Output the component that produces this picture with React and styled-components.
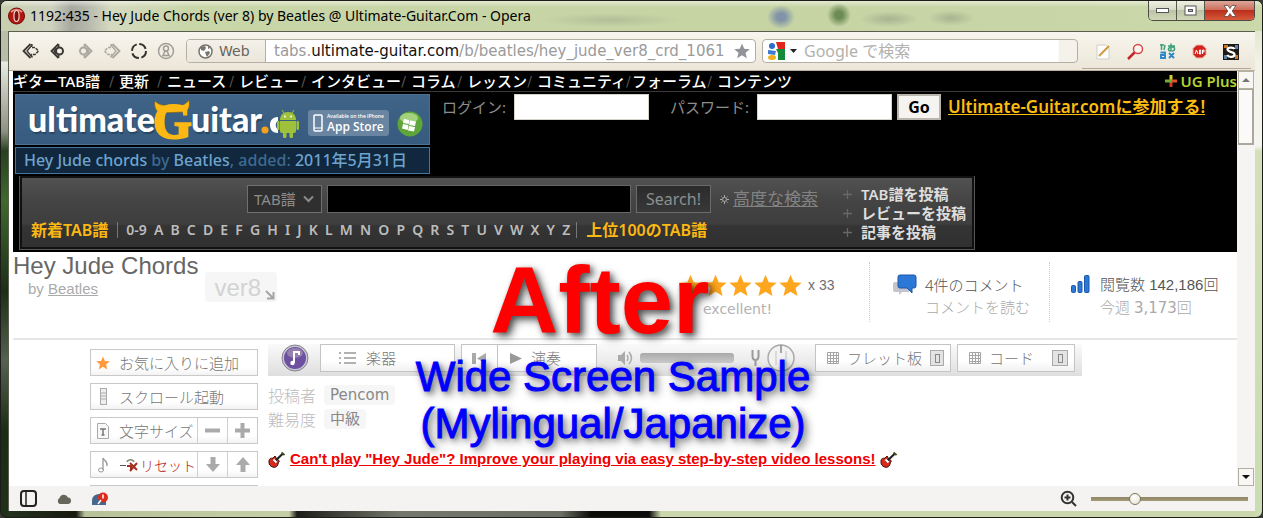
import React from "react";
import styled, { createGlobalStyle } from "styled-components";

const UI = `"DejaVu Sans", "Noto Sans CJK JP", sans-serif`;
const JP = `"Noto Sans CJK JP", "DejaVu Sans", sans-serif`;
const TREB = `"Noto Sans", "Noto Sans CJK JP", sans-serif`;
const ARIAL = `"Liberation Sans", "Noto Sans CJK JP", sans-serif`;

const Global = createGlobalStyle`
  * { box-sizing: border-box; }
  body { margin: 0; background: #3a3a36; font-family: ${UI}; font-size: 14px; }
  button, input, select { font: inherit; margin: 0; padding: 0; border-radius: 0; }
  h1, p, ul { margin: 0; padding: 0; font-weight: normal; }
  ul { list-style: none; }
  svg { display: block; flex: none; }
`;

/* ---------- window frame ---------- */
const Window = styled.div`
  position: relative;
  display: flex;
  flex-direction: column;
  height: 100vh;
  padding: 0 7px 6px;
  border: 1px solid #1c1d18;
  border-radius: 7px;
  overflow: hidden;
  background:
    linear-gradient(180deg, #b9c0a8 0, #b8bda8 60px, #e8ebe2 61px, #8d9283 130px, #27401f 150px, #3e6a2c 200px, #1c2e18 290px, #56614f 360px, #1b2b16 430px, #20301b 100%) left top / 7px 100% no-repeat,
    linear-gradient(180deg, #d3dcb8 0, #f2f2e6 60px, #f4f5ee 145px, #d3dfb8 150px, #cbdcb0 100%) right top / 7px 100% no-repeat,
    linear-gradient(90deg, #26351f 0, #17180f 75px, #b8c29a 84px, #c5cfa6 288px, #1b1b18 296px, #74786c 400px, #6b6f64 560px, #0c0c0a 590px, #0c0c0a 648px, #cad6ab 660px, #cad6ab 100%);
`;

const TitleBar = styled.header`
  display: flex;
  align-items: flex-start;
  height: 30px;
  flex: none;
  margin: 0 -7px;
  padding-left: 7px;
  background:
    radial-gradient(ellipse 14px 12px at 780px 16px, #8093a8 30%, transparent),
    radial-gradient(ellipse 12px 12px at 838px 14px, #6b8a54 30%, transparent),
    radial-gradient(ellipse 30px 8px at 888px 18px, #a9b391, transparent),
    radial-gradient(ellipse 24px 8px at 950px 17px, #a9b391, transparent),
    radial-gradient(ellipse 70px 7px at 610px 19px, #b3bf98, transparent),
    linear-gradient(180deg, rgba(255,255,255,.5) 0, transparent 6px),
    linear-gradient(90deg, #c6cfae 0, #cfd2bf 50px, #a7a9a0 70px, #b3b5ab 84px, #d5dabf 110px, #c9d6a8 190px, #c6d4a4 60%, #cad8aa 100%);
`;
const AppMark = styled.div`
  padding-top: 6px;
`;
const WindowTitle = styled.h1`
  flex: 1;
  padding: 6px 0 0 5px;
  font: 14px/18px "Noto Sans", ${UI};
  color: #000;
  white-space: nowrap;
`;
const WindowControls = styled.div`
  display: flex;
  height: 20px;
  margin-right: 7px;
  border: 1px solid #4d4b43;
  border-top: 0;
  border-radius: 0 0 5px 5px;
  overflow: hidden;
`;
const ControlButton = styled.button`
  display: flex;
  align-items: center;
  justify-content: center;
  width: ${(p) => (p.$close ? 49 : 28)}px;
  border: 0;
  border-right: ${(p) => (p.$close ? "0" : "1px solid #55564a")};
  background: ${(p) =>
    p.$close
      ? "linear-gradient(180deg,#dba79a 0,#cf6f5c 45%,#b92f1b 50%,#d9593c 100%)"
      : "linear-gradient(180deg,#eef0e2 0,#d6dac5 45%,#bcc3a5 50%,#d0d8b7 100%)"};
`;

const Client = styled.div`
  display: flex;
  flex-direction: column;
  flex: 1;
  min-height: 0;
  border: 1px solid #5b5e4e;
  border-width: 1px 0 0 1px;
  background: #f6f4f2;
`;

/* ---------- browser toolbar ---------- */
const Toolbar = styled.div`
  display: flex;
  align-items: center;
  flex: none;
  height: 39px;
  padding: 0 4px 0 13px;
  background: linear-gradient(180deg, #f7f5ee 0, #f1ece0 60%, #ebe6d8 100%);
  border-bottom: 1px solid #b9b09f;
`;
const NavButtons = styled.div`
  display: flex;
  gap: 9px;
`;
const PlainButton = styled.button`
  display: flex;
  align-items: center;
  justify-content: center;
  width: ${(p) => p.$w || 18}px;
  height: 20px;
  border: 0;
  background: none;
`;
const AddressBar = styled.div`
  display: flex;
  align-items: center;
  flex: 1;
  height: 24px;
  margin-left: 11px;
  border: 1px solid #b3afa2;
  border-radius: 4px;
  background: #fff;
  overflow: hidden;
  padding-right: 5px;
`;
const WebBadge = styled.button`
  display: flex;
  align-items: center;
  gap: 6px;
  height: 24px;
  width: 79px;
  padding: 0 0 0 11px;
  border: 0;
  border-right: 1px solid #b3afa2;
  background: linear-gradient(180deg, #f4f1ea, #ebe6da);
  color: #66645f;
`;
const UrlText = styled.div`
  flex: 1;
  padding-left: 8px;
  font: 15px/22px ${UI};
  color: #9a9a9a;
  white-space: nowrap;
  b { font-weight: normal; color: #111; }
`;
const SearchBox = styled.label`
  display: flex;
  align-items: center;
  width: 316px;
  height: 24px;
  margin-left: 6px;
  padding-left: 4px;
  gap: 5px;
  border: 1px solid #b3afa2;
  border-radius: 4px;
  background: linear-gradient(90deg, #fff 295px, #f5f2ec 296px);
  input {
    flex: 1;
    min-width: 0;
    height: 22px;
    margin-left: 2px;
    border: 0;
    background: transparent;
    font-family: ${TREB};
    font-size: 16px;
  }
  input::placeholder { color: #b3b1ad; opacity: 1; }
`;
const Extensions = styled.div`
  display: flex;
  align-items: center;
  justify-content: space-between;
  width: 169px;
  height: 33px;
  margin: 2px 0 0 4px;
  padding: 0 11px 0 12px;
  border-bottom: 1px solid #b5a89a;
`;

/* ---------- page view ---------- */
const View = styled.div`
  display: flex;
  flex: 1;
  min-height: 0;
  padding-left: 4px;
  background: #fff;
`;
const Page = styled.main`
  position: relative;
  flex: 1;
  min-width: 0;
  overflow: hidden;
  background: #fff;
`;
const Scrollbar = styled.div`
  display: flex;
  flex-direction: column;
  width: 18px;
  background: #f5f4f2;
  padding: 0 1px;
`;
const ScrollButton = styled.button`
  display: flex;
  align-items: center;
  justify-content: center;
  height: 18px;
  border: 1px solid #b3b0a2;
  background: #f8f7f3;
`;
const ScrollTrack = styled.div`
  flex: 1;
`;
const ScrollThumb = styled.div`
  height: 56px;
  border: 1px solid #aaa89c;
  border-right-width: 2px;
  border-bottom-width: 2px;
  background: #fbfaf8;
`;

/* ---------- site header ---------- */
const SiteHeader = styled.div`
  background: #000;
  height: 181px;
`;
const TopNav = styled.nav`
  display: flex;
  justify-content: space-between;
  height: 21px;
  border-bottom: 1px solid #3c3a38;
`;
const NavList = styled.ul`
  display: grid;
  grid-template-columns: 106px 48px 72px 72px 100px 56px 70px 95px 85px 80px;
  li { display: flex; justify-content: space-between; padding-right: 5px; white-space: nowrap; }
`;
const NavLink = styled.a`
  font: 500 15px/20px ${TREB};
  color: #fff;
  text-decoration: none;
`;
const Slash = styled.span`
  font: 14px/20px ${UI};
  color: #555;
`;
const PlusLink = styled.a`
  display: flex;
  align-items: center;
  gap: 4px;
  font: 600 15px/20px ${TREB};
  color: #b4d334;
  text-decoration: none;
`;
const HeaderTop = styled.div`
  display: flex;
  height: 84px;
  padding: 2px 0 0 2px;
`;
const Brand = styled.div`
  width: 415px;
  display: flex;
  flex-direction: column;
  gap: 2px;
`;
const Banner = styled.div`
  display: flex;
  align-items: center;
  height: 51px;
  padding-right: 6px;
  background: linear-gradient(180deg, #406487, #365b7e);
  border: 1px solid #4c7092;
`;
const StoreBadge = styled.a`
  display: flex;
  align-items: center;
  gap: 4px;
  width: 81px;
  height: 26px;
  margin: 7px 8px 0 auto;
  padding-left: 5px;
  border-radius: 3px;
  background: #6985a2;
  color: #fff;
  text-decoration: none;
  font: 600 12px/13px "Open Sans", sans-serif;
  white-space: nowrap;
  small { display: block; font-size: 5px; line-height: 7px; }
`;
const AddedLine = styled.p`
  height: 27px;
  padding-left: 8px;
  border: 1px solid #46759c;
  background: #10273d;
  color: #3f6a8f;
  font: 500 16px/25px ${TREB};
  white-space: nowrap;
  b { font-weight: 500; color: #6ea3cd; }
`;
const LoginForm = styled.form`
  display: flex;
  align-items: center;
  height: 26px;
  padding-left: 12px;
  font: 15px/24px ${TREB};
  color: #8d8d8d;
  white-space: nowrap;
  label { display: flex; align-items: center; justify-content: space-between; margin-right: 21px; }
  label + label { margin-right: 5px; }
`;
const LoginInput = styled.input`
  width: 135px;
  height: 26px;
  margin-left: 8px;
  border: 1px solid #d5d2ca;
  background: #fff;
`;
const GoButton = styled.button`
  width: 44px;
  height: 26px;
  border: 2px solid #b9b5ad;
  background: #f6f4f1;
  color: #000;
  font: bold 16px/20px ${TREB};
`;
const JoinLink = styled.a`
  margin-left: 7px;
  color: #fdbd10;
  font: 600 17px/24px ${TREB};
`;

const SearchPanel = styled.form`
  display: flex;
  width: 956px;
  max-width: 100%;
  height: 74px;
  margin-left: 6px;
  padding: 9px 4px 6px 11px;
  border: 1px solid #555;
  border-top: 0;
  background: linear-gradient(180deg, #535353 0, #444 25px, #3e3e3e 48px, #343434 50px, #303030 100%);
  box-shadow: inset 0 0 0 2px #111;
`;
const SearchMain = styled.div`
  width: 812px;
  display: flex;
  flex-direction: column;
  gap: 6px;
`;
const SearchRow = styled.div`
  display: flex;
  align-items: center;
  height: 28px;
  padding-left: 216px;
`;
const KindSelect = styled.span`
  display: flex;
  align-items: center;
  width: 75px;
  height: 28px;
  padding: 0 7px 0 6px;
  border: 1px solid #707070;
  background: #2f2f2f;
  select {
    flex: 1;
    min-width: 0;
    appearance: none;
    border: 0;
    background: transparent;
    color: #8c8c8c;
    font: 15px/24px ${TREB};
  }
`;
const QueryInput = styled.input`
  width: 304px;
  height: 28px;
  margin: 0 5px 0 5px;
  border: 1px solid #666;
  background: #000;
`;
const SearchButton = styled.button`
  width: 75px;
  height: 28px;
  border: 1px solid #6b6b6b;
  background: linear-gradient(180deg, #2b2b2b, #383838);
  color: #8b9090;
  font: 16px/24px ${TREB};
`;
const AdvancedLink = styled.a`
  margin-left: 4px;
  color: #838383;
  font: 17px/24px ${TREB};
`;
const AlphaRow = styled.div`
  display: flex;
  align-items: center;
  gap: 9px;
  font: 600 14px/22px ${TREB};
  white-space: nowrap;
`;
const AccentLink = styled.a`
  color: #fbb813;
  text-decoration: none;
  font: 600 16px/22px ${TREB};
`;
const Letters = styled.div`
  display: flex;
  justify-content: space-between;
  width: 460px;
  padding: 0 6px 0 8px;
  border: solid #777;
  border-width: 0 1px;
  line-height: 16px;
  a { color: #bdbdbd; text-decoration: none; }
`;
const SubmitList = styled.ul`
  li { display: flex; align-items: center; gap: 9px; height: 19px; white-space: nowrap; }
  a { color: #dedede; text-decoration: none; font: 600 15px/19px ${TREB}; }
`;

/* ---------- song header ---------- */
const SongHeader = styled.section`
  display: flex;
  height: 88px;
  border-bottom: 2px solid #e6e6e6;
  color: #6d6d6d;
  font-family: ${ARIAL};
`;
const SongTitle = styled.div`
  h2 { margin: 0; font: 24px/27px ${ARIAL}; color: #666; white-space: nowrap; }
  p { padding-left: 15px; font: 15px/20px ${ARIAL}; color: #aaa; }
  a { color: #aaa; }
`;
const Version = styled.button`
  display: flex;
  align-items: flex-end;
  gap: 4px;
  width: 72px;
  height: 30px;
  margin: 20px auto 0 7px;
  padding: 0 0 0 9px;
  border: 0;
  border-radius: 3px;
  background: #f6f6f6;
  color: #d3d3d3;
  font: 24px/29px ${ARIAL};
`;
const Stat = styled.div`
  display: flex;
  gap: ${(p) => p.$gap || 8}px;
  width: ${(p) => p.$w}px;
  height: 60px;
  margin-top: 10px;
  padding: 12px 0 0 ${(p) => p.$left}px;
  border-left: 1px dotted #ccc;
`;
const StatText = styled.div`
  font: 300 15px/22px ${(p) => (p.$ui ? TREB : ARIAL)};
  color: #555;
  white-space: nowrap;
  small { display: block; font: 300 15px/22px ${TREB}; color: #aaa; }
  small span { font: 15px/22px ${UI}; }
`;
const Rating = styled.div`
  width: 200px;
  padding: 22px 0 0 10px;
  font: 14px/23px ${ARIAL};
  small { display: block; padding-left: 24px; font: 14px/24px ${UI}; color: #b2b2b2; }
`;
const StarRow = styled.div`
  display: flex;
  gap: 2px;
  white-space: nowrap;
  span { padding-left: 4px; }
`;

/* ---------- song tools ---------- */
const Body = styled.div`
  display: flex;
  gap: 10px;
  padding-left: 77px;
`;
const Sidebar = styled.div`
  display: flex;
  flex-direction: column;
  flex: none;
  gap: 7px;
  width: 168px;
  padding-top: 9px;
`;
const SideRow = styled.div`
  display: flex;
  height: 27px;
  border: 1px solid #c9c9c9;
  background: linear-gradient(180deg, #fff 70%, #f3f3f3);
`;
const SideButton = styled.button`
  display: flex;
  align-items: center;
  flex: 1;
  min-width: 0;
  gap: ${(p) => (p.$red ? 2 : 9)}px;
  padding-left: 5px;
  border: 0;
  background: none;
  color: ${(p) => (p.$red ? "#b01717" : "#777")};
  font: 300 ${(p) => (p.$red ? 14 : 15)}px/24px ${JP};
  white-space: nowrap;
`;
const StepButton = styled.button`
  display: flex;
  align-items: center;
  justify-content: center;
  flex: none;
  width: 30px;
  border: 0;
  border-left: 1px solid #d0d0d0;
  background: none;
`;
const Main = styled.div`
  flex: 1;
  min-width: 0;
  padding-top: 4px;
`;
const PlayerBar = styled.div`
  display: flex;
  width: 814px;
  height: 32px;
  padding-left: 13px;
  background: linear-gradient(180deg, #fafafa, #dedede);
`;
const BarButton = styled.button`
  display: flex;
  align-items: center;
  gap: ${(p) => p.$gap || 8}px;
  width: ${(p) => p.$w}px;
  height: 28px;
  margin-left: ${(p) => p.$ml || 0}px;
  padding: 0 6px 0 ${(p) => p.$pl || 11}px;
  border: 1px solid #c4c4c4;
  border-left-width: ${(p) => (p.$joined ? 0 : 1)}px;
  background: linear-gradient(180deg, #fff 60%, #f1f1f1);
  color: #777;
  font: 300 15px/24px ${JP};
  white-space: nowrap;
`;
const Key = styled.kbd`
  display: flex;
  align-items: center;
  justify-content: center;
  width: 16px;
  height: 16px;
  margin-left: auto;
  border: 1px solid #aaa;
  background: #e3e3e3;
  i { width: 5px; height: 9px; border: 1px solid #888; }
`;
const Volume = styled.input`
  appearance: none;
  width: 94px;
  height: 10px;
  margin: 9px 0 0 6px;
  border-radius: 3px;
  background: linear-gradient(180deg, #a9a9a9, #c9c9c9);
  &::-webkit-slider-thumb { appearance: none; width: 1px; height: 1px; }
`;
const Gadget = styled.div`
  padding-top: ${(p) => p.$top || 0}px;
  margin-left: ${(p) => p.$ml || 0}px;
`;
const Facts = styled.dl`
  display: grid;
  grid-template-columns: 56px auto;
  justify-content: start;
  row-gap: 4px;
  margin: 9px 0 0;
  font: 300 16px/20px ${JP};
  color: #bbb;
  dd { margin: 0; justify-self: start; padding: 0 6px; border-radius: 4px; background: #f6f6f6; color: #888; font: 15px/20px ${UI}; }
`;
const Promo = styled.p`
  display: flex;
  align-items: center;
  gap: 5px;
  margin-top: 21px;
  a { color: #f00000; font: bold 15px/18px ${ARIAL}; white-space: nowrap; }
`;

/* ---------- caption lying over the page ---------- */
const Caption = styled.div`
  position: absolute;
  left: 400px;
  top: 178px;
  width: 400px;
  text-align: center;
  white-space: nowrap;
  font-family: ${ARIAL};
  text-shadow: 4px 4px 9px rgba(0,0,0,.55), 2px 2px 5px rgba(0,0,0,.35);
  pointer-events: none;
`;
const BigWord = styled.div`
  padding-right: 26px;
  font-size: 94px;
  line-height: 104px;
  font-weight: bold;
  color: #f00;
`;
const SubLine = styled.div`
  font-size: 42px;
  line-height: 47px;
  color: #00f;
  -webkit-text-stroke: 1px #00f;
`;

/* ---------- status bar ---------- */
const StatusBar = styled.footer`
  display: flex;
  align-items: center;
  flex: none;
  height: 25px;
  padding: 0 7px 0 11px;
  background: #f5f3f1;
`;
const Zoom = styled.div`
  display: flex;
  align-items: center;
  gap: 14px;
  margin-left: auto;
`;
const ZoomRange = styled.input`
  appearance: none;
  width: 157px;
  height: 14px;
  background: linear-gradient(#8f8763, #a39b78) center / 100% 4px no-repeat;
  &::-webkit-slider-thumb {
    appearance: none;
    width: 12px;
    height: 12px;
    border: 1px solid #7d755a;
    border-radius: 50%;
    background: radial-gradient(circle at 40% 30%, #fff, #e6e0cc);
  }
`;

/* ---------- drawings ---------- */
const Arrow = ({ flip, pale, dot, bar }) => (
  <svg width="18" height="18" viewBox="0 0 18 18" fill="none" stroke={pale ? "#aaa89f" : "#3b3a35"} strokeWidth="1.8">
    <g transform={flip ? "translate(18 0) scale(-1 1)" : undefined}>
      {dot ? (
        <>
          <path d="M9.500 2 2.500 9l7 7" />
          <path d="M9.500 2v3M9.500 13v3" />
          <circle cx="10.500" cy="9" r="3.500" strokeWidth="2" />
          <path d="M5 9l2.500-2.500M5 9l2.500 2.500" />
        </>
      ) : (
        <>
          <path d="M8.500 2 1.500 9l7 7" />
          <path d="M10.500 2.500 5 9l5.500 6.500" strokeWidth="1.300" />
          <path d="M9.500 2v3.500h3.500l3.500 3.500-3.500 3.500H9.500V16" strokeWidth="1.500" strokeDasharray={bar ? "3 1" : undefined} />
        </>
      )}
    </g>
  </svg>
);
const Star = ({ size = 23, fill = "#ffa61f" }) => (
  <svg width={size} height={size} viewBox="0 0 24 24">
    <path fill={fill} d="M12 .8l3.300 7.700 8.400.7-6.400 5.500 2 8.300L12 18.500l-7.300 4.500 2-8.300L.3 9.200l8.400-.7z" />
  </svg>
);
const Grid = () => (
  <svg width="12" height="12" viewBox="0 0 12 12">
    <path fill="none" stroke="#a5a5a5" d="M.5.5h11v11H.5zM3.500 0v12M6.500 0v12M9.500 0v12M0 3.500h12M0 6.500h12M0 9.500h12" />
  </svg>
);
const Cross = () => (
  <svg width="9" height="9" viewBox="0 0 9 9"><path d="M4.500 0v9M0 4.500h9" stroke="#686868" strokeWidth="1.300" /></svg>
);
const Guitar = () => (
  <svg width="17" height="17" viewBox="0 0 17 17">
    <path d="M1 10C1 7.500 3 7 5 7.200L7 5l1.500 2.500L11.500 10C10 11 10.500 12.500 9.500 14.500c-1 1.800-3 2-5 1.500-2-.6-3.500-2.500-3.500-4.500z" fill="#d92a1d" stroke="#3a0d08" />
    <path d="M6 11 15 2.500" stroke="#222" strokeWidth="2.200" />
    <path d="M5.500 8.500 8.500 11.500" stroke="#fff" strokeWidth="2" />
    <path d="M13.500 1.500 16.500 4" stroke="#444d1c" strokeWidth="1.800" />
  </svg>
);
const Logo = () => (
  <svg width="286" height="49" viewBox="0 0 286 49">
    <g fontFamily="Lato, sans-serif" fontWeight="900" fontSize="34">
      <g fill="#1d3a57" opacity=".6"><text x="13" y="39">ultimate</text><text x="176" y="39">uitar</text></g>
      <g fill="#fff"><text x="12" y="37">ultimate</text><text x="175" y="37">uitar</text></g>
      <circle cx="249" cy="35" r="3.500" fill="#f7a11c" />
      <path d="M262 22c-5 0-8 3-8 8s3 8 8 8v-4c-3-1-3-7 0-8z" fill="#fff" />
    </g>
    <path d="M139 6c4 4 8 5 15 4h7c6 1 9-1 12-5 1 6 0 11-5 12l-24 1c-5-2-6-8-5-12z" fill="#fcb813" stroke="#7a5a10" strokeWidth=".6" />
    <text x="137" y="43" fontFamily="Liberation Serif, serif" fontWeight="bold" fontSize="50" fill="#fcb813" stroke="#fcb813" strokeWidth="2">G</text>
    <g fill="#9fc23c">
      <path d="M264 25c0-5 3-8 8-8s8 3 8 8z" />
      <path d="M264 26h16v10a2 2 0 0 1-2 2h-12a2 2 0 0 1-2-2z" />
      <rect x="261" y="26" width="2.500" height="9" rx="1.200" /><rect x="280.500" y="26" width="2.500" height="9" rx="1.200" />
      <rect x="267" y="36" width="3.500" height="7" rx="1.500" /><rect x="273.500" y="36" width="3.500" height="7" rx="1.500" />
      <path d="M266 15l2 3M278 15l-2 3" stroke="#9fc23c" />
    </g>
    <circle cx="269" cy="21.500" r="1" fill="#fff" /><circle cx="275" cy="21.500" r="1" fill="#fff" />
  </svg>
);

const NAV = ["ギターTAB譜", "更新", "ニュース", "レビュー", "インタビュー", "コラム", "レッスン", "コミュニティ", "フォーラム", "コンテンツ"];
const ALPHA = ["0-9", ..."ABCDEFGHIJKLMNOPQRSTUVWXYZ"];

export default function App() {
  return (
    <>
      <Global />
      <Window>
        <TitleBar>
          <AppMark>
            <svg width="17" height="18" viewBox="0 0 17 18">
              <circle cx="8.500" cy="9" r="8" fill="#b3160f" stroke="#6d0d08" />
              <path d="M3 5a7 6 0 0 1 11 0" stroke="#ea8a80" strokeWidth="2" fill="none" />
              <ellipse cx="8.500" cy="9" rx="2.600" ry="5.500" fill="#7d0f0a" stroke="#f3cfca" strokeWidth="1.200" />
            </svg>
          </AppMark>
          <WindowTitle>1192:435 - Hey Jude Chords (ver 8) by Beatles @ Ultimate-Guitar.Com - Opera</WindowTitle>
          <WindowControls>
            <ControlButton aria-label="Minimize"><svg width="14" height="6"><rect x=".5" y=".5" width="12" height="4" fill="#fff" stroke="#555" /></svg></ControlButton>
            <ControlButton aria-label="Maximize"><svg width="14" height="12"><rect x="1" y="1" width="11" height="9" fill="#fff" stroke="#555" /><rect x="4.500" y="4.500" width="4" height="2" fill="#bbb" stroke="#555" /></svg></ControlButton>
            <ControlButton aria-label="Close" $close><svg width="14" height="12" viewBox="0 0 14 12"><path d="M1 .5h4l2 3 2-3h4L9.200 6 13 11.500H9l-2-3-2 3H1L4.800 6z" fill="#fff" stroke="#5b4a4a" strokeWidth=".8" /></svg></ControlButton>
          </WindowControls>
        </TitleBar>

        <Client>
          <Toolbar>
            <NavButtons>
              <PlainButton aria-label="Rewind"><Arrow bar /></PlainButton>
              <PlainButton aria-label="Back"><Arrow dot /></PlainButton>
              <PlainButton aria-label="Forward"><Arrow flip pale dot /></PlainButton>
              <PlainButton aria-label="Fast forward"><Arrow flip pale bar /></PlainButton>
              <PlainButton aria-label="Reload"><svg width="18" height="18"><circle cx="9" cy="9" r="7" fill="none" stroke="#33322e" strokeWidth="2" strokeDasharray="8.500 2.500" /></svg></PlainButton>
              <PlainButton aria-label="Password">
                <svg width="18" height="18" fill="none" stroke="#a09e96"><circle cx="9" cy="9" r="7.500" strokeWidth="1.500" /><circle cx="9" cy="6.500" r="2.500" strokeWidth="1.500" /><path d="M6 13.500 8 9h2l2 4.500z" strokeWidth="1.500" /></svg>
              </PlainButton>
            </NavButtons>
            <AddressBar>
              <WebBadge>
                <svg width="15" height="15"><circle cx="7.500" cy="7.500" r="6.500" fill="#fff" stroke="#77746c" strokeWidth="1.500" /><path d="M3 3l4-1 1 2-2 3-3-1zM7 8l4-1 1 2-3 4-1-2zM10 2l2 2-2 1z" fill="#77746c" /></svg>
                Web
              </WebBadge>
              <UrlText>tabs.<b>ultimate-guitar.com</b>/b/beatles/hey_jude_ver8_crd_1061</UrlText>
              <Star size={16} fill="#92929a" />
            </AddressBar>
            <SearchBox>
              <svg width="18" height="18" viewBox="0 0 18 18"><rect width="18" height="18" fill="#fff" /><path d="M9 0h9v7h-7z" fill="#e0231b" /><path d="M9 7h9v11h-7V11z" fill="#158a3a" /><circle cx="5" cy="4" r="3" fill="#2f6bc9" /><path d="M1 8l8 1-1 4-7-1z" fill="#3f7bd0" /><ellipse cx="5" cy="15.500" rx="4" ry="2.500" fill="#efb21c" /></svg>
              <svg width="7" height="4"><path d="M0 0h7L3.500 4z" fill="#222" /></svg>
              <input aria-label="Search" placeholder="Google で検索" />
            </SearchBox>
            <Extensions>
              <PlainButton aria-label="Notes"><svg width="16" height="16"><path d="M2 1h9l3 3v11H2z" fill="#fdfdfb" stroke="#d2cfc5" /><path d="M4 12 14 2" stroke="#d09a3a" strokeWidth="2" /></svg></PlainButton>
              <PlainButton aria-label="Find"><svg width="17" height="17" fill="none"><circle cx="11" cy="6" r="4.500" stroke="#d8474a" strokeWidth="1.500" fill="#fbf5ee" /><path d="M7.500 9.500 1 16" stroke="#c1272d" strokeWidth="2.500" /></svg></PlainButton>
              <PlainButton aria-label="Translate"><svg width="17" height="17" viewBox="0 0 17 17" fill="none"><path d="M1 2h4M2.500 1v6M6 2l-1 5M9 3h7M12 .5v7.500c-4 0-3-4 1-4s3 4 0 4" stroke="#3da07a" strokeWidth="1.500" /><path d="M1.500 9.500H6V15H2v-3h4M10 10l5 5M15 10l-5 5" stroke="#2a87c8" strokeWidth="1.900" /></svg></PlainButton>
              <PlainButton aria-label="Ad block"><svg width="15" height="15" viewBox="0 0 15 15"><path d="M4.500 1h6L14 4.500v6L10.500 14h-6L1 10.500v-6z" fill="#d2231b" stroke="#eeb4ae" /><path d="M3 10l1.500-4L6 10M7.500 10V6h1.200v4zM10.500 10V6h1.500v2h-1.500" stroke="#fff" fill="none" /></svg></PlainButton>
              <PlainButton aria-label="Script"><svg width="16" height="16" viewBox="0 0 16 16"><rect width="16" height="16" fill="#1d1a16" /><path d="M1 1h4v3H1zM12 11h3v4h-3z" fill="#c9762d" /><path d="M12 1h3v4h-3zM1 11h3v4H1z" fill="#5b7fa8" /><path d="M11.500 5c-1-2-7-2-7 .6S11.500 7.500 11.500 10.500s-6 3-7.300.5" fill="none" stroke="#fff" strokeWidth="2.200" /></svg></PlainButton>
            </Extensions>
          </Toolbar>

          <View>
            <Page>
              <SiteHeader>
                <TopNav>
                  <NavList>
                    {NAV.map((t, i) => (
                      <li key={t}><NavLink href="#">{t}</NavLink>{i < NAV.length - 1 && <Slash>/</Slash>}</li>
                    ))}
                  </NavList>
                  <PlusLink href="#">
                    <svg width="12" height="12"><path d="M6 0v6" stroke="#d8d02a" strokeWidth="3" /><path d="M6 6h6" stroke="#e2562a" strokeWidth="3" /><path d="M6 6v6" stroke="#d33a2a" strokeWidth="3" /><path d="M0 6h7" stroke="#6fae3a" strokeWidth="3" /></svg>
                    UG Plus
                  </PlusLink>
                </TopNav>
                <HeaderTop>
                  <Brand>
                    <Banner>
                      <Logo />
                      <StoreBadge href="#">
                        <svg width="10" height="18"><rect x="1" y="1" width="8" height="16" rx="1" fill="none" stroke="#fff" strokeWidth="1.500" /><path d="M1 14h8" stroke="#fff" /></svg>
                        <span><small>Available on the iPhone</small>App Store</span>
                      </StoreBadge>
                      <Gadget $top={8}>
                        <svg width="26" height="26" viewBox="0 0 26 26"><circle cx="13" cy="13" r="12.500" fill="#5ea63a" /><ellipse cx="12" cy="7" rx="9" ry="5" fill="#a5d17e" /><path d="M7 8l5 1v4l-6-1zM13 9.500l6 1-1 4.500-6-1zM6 13l5.500 1-.8 5L5 17.500zM12 15l6 1-1 4.500-6-1z" fill="#fff" /></svg>
                      </Gadget>
                    </Banner>
                    <AddedLine><b>Hey Jude chords</b> by <b>Beatles</b>, added: <b>2011年5月31日</b></AddedLine>
                  </Brand>
                  <LoginForm>
                    <label>ログイン: <LoginInput type="text" /></label>
                    <label>パスワード: <LoginInput type="password" /></label>
                    <GoButton type="button">Go</GoButton>
                    <JoinLink href="#">Ultimate-Guitar.comに参加する!</JoinLink>
                  </LoginForm>
                </HeaderTop>
                <SearchPanel>
                  <SearchMain>
                    <SearchRow>
                      <KindSelect>
                        <select aria-label="種類"><option>TAB譜</option></select>
                        <svg width="11" height="8"><path d="M1 1.500 5.500 6 10 1.500" fill="none" stroke="#8c8c8c" strokeWidth="2" /></svg>
                      </KindSelect>
                      <QueryInput aria-label="検索" />
                      <SearchButton type="button">Search!</SearchButton>
                      <Gadget $ml={9}>
                        <svg width="9" height="9" viewBox="0 0 9 9"><circle cx="4.500" cy="4.500" r="2" fill="none" stroke="#aaa" /><path d="M4.500 0v2M4.500 7v2M0 4.500h2M7 4.500h2M1.500 1.500l1 1M6.500 6.500l1 1M7.500 1.500l-1 1M2.500 6.500l-1 1" stroke="#aaa" /></svg>
                      </Gadget>
                      <AdvancedLink href="#">高度な検索</AdvancedLink>
                    </SearchRow>
                    <AlphaRow>
                      <AccentLink href="#">新着TAB譜</AccentLink>
                      <Letters>{ALPHA.map((c) => <a key={c} href="#">{c}</a>)}</Letters>
                      <AccentLink href="#">上位100のTAB譜</AccentLink>
                    </AlphaRow>
                  </SearchMain>
                  <SubmitList>
                    {["TAB譜を投稿", "レビューを投稿", "記事を投稿"].map((t) => (
                      <li key={t}><Cross /><a href="#">{t}</a></li>
                    ))}
                  </SubmitList>
                </SearchPanel>
              </SiteHeader>

              <SongHeader>
                <SongTitle>
                  <h2>Hey Jude Chords</h2>
                  <p>by <a href="#">Beatles</a></p>
                </SongTitle>
                <Version>
                  ver8
                  <svg width="10" height="13" viewBox="0 0 10 13"><path d="M1 2l7 7M8.500 3v6.500H2" fill="none" stroke="#a5a5a5" strokeWidth="2" /></svg>
                </Version>
                <Rating>
                  <StarRow><Star /><Star /><Star /><Star /><Star /><span>x 33</span></StarRow>
                  <small>excellent!</small>
                </Rating>
                <Stat $w={180} $left={23} $gap={8}>
                  <svg width="24" height="22" viewBox="0 0 24 22"><path d="M2 8h14v10H9l-3 3v-3H2a2 2 0 0 1-2-2v-6a2 2 0 0 1 2-2z" fill="#c4c4cc" /><path d="M7 1h14a2 2 0 0 1 2 2v9a2 2 0 0 1-2 2h-2v5l-5-5H7a2 2 0 0 1-2-2V3a2 2 0 0 1 2-2z" fill="#2b78d6" stroke="#1f57a8" /></svg>
                  <StatText $ui>4件のコメント<small>コメントを読む</small></StatText>
                </Stat>
                <Stat $w={188} $left={21} $gap={10}>
                  <svg width="19" height="20" viewBox="0 0 19 20" fill="#2b78d6" stroke="#1f57a8"><rect x=".5" y="11.500" width="4" height="7" rx="1" /><rect x="7" y="7.500" width="4" height="11" rx="1" /><rect x="13.500" y="1.500" width="4.500" height="17" rx="1" /></svg>
                  <StatText>閲覧数 142,186回<small>今週 <span>3,173</span>回</small></StatText>
                </Stat>
              </SongHeader>

              <Body>
                <Sidebar>
                  <SideRow><SideButton><Star size={14} fill="#ff9a3c" />お気に入りに追加</SideButton></SideRow>
                  <SideRow><SideButton><svg width="14" height="17"><rect x="4.500" y=".5" width="6" height="16" fill="#eee" stroke="#aaa" /><path d="M5 5h5M5 8h5M5 11h5" stroke="#aaa" /></svg>スクロール起動</SideButton></SideRow>
                  <SideRow>
                    <SideButton><svg width="14" height="16"><path d="M1.500.5h8l3 3v12h-11z" fill="#f8f8f8" stroke="#aaa" /><path d="M4 6h6M7 6v6M5.500 12h3" stroke="#777" strokeWidth="1.500" /></svg>文字サイズ</SideButton>
                    <StepButton aria-label="縮小"><svg width="15" height="15"><path d="M0 7.500h15" stroke="#aaa" strokeWidth="4" /></svg></StepButton>
                    <StepButton aria-label="拡大"><svg width="15" height="15"><path d="M0 7.500h15M7.500 0v15" stroke="#aaa" strokeWidth="4" /></svg></StepButton>
                  </SideRow>
                  <SideRow>
                    <SideButton $red>
                      <svg width="42" height="16" viewBox="0 0 42 16" fill="none">
                        <path d="M7 13V1c1 3 5 3 4 8" stroke="#999" strokeWidth="1.300" /><ellipse cx="5" cy="13" rx="2.500" ry="2" stroke="#999" />
                        <path d="M24 8.500h6" stroke="#555" />
                        <path d="M31 5c1-3 6-3 7 0" stroke="#8a8a78" strokeWidth="1.500" />
                        <path d="M31 9h4v4M34 6l7 7M41 6l-7 8" stroke="#a33022" strokeWidth="2" />
                      </svg>
                      リセット
                    </SideButton>
                    <StepButton aria-label="下げる"><svg width="14" height="16"><path d="M4.500 0h5v7H14l-7 8-7-8h4.500z" fill="#aaa" /></svg></StepButton>
                    <StepButton aria-label="上げる"><svg width="14" height="16"><path d="M4.500 15h5V8H14L7 0 0 8h4.500z" fill="#aaa" /></svg></StepButton>
                  </SideRow>
                  <SideRow />
                </Sidebar>
                <Main>
                  <PlayerBar>
                    <svg width="28" height="28" viewBox="0 0 28 28"><circle cx="14" cy="14" r="13" fill="#c9c6d3" stroke="#85828f" /><circle cx="14" cy="14" r="11" fill="#6d51a0" /><ellipse cx="14" cy="9" rx="8" ry="5" fill="#b39fb8" opacity=".6" /><path d="M13 19V8h5v3" fill="none" stroke="#fff" strokeWidth="2" /><circle cx="11.500" cy="19" r="2.200" fill="#fff" /></svg>
                    <BarButton $w={135} $ml={11} $pl={18} $gap={10}><svg width="17" height="12"><path d="M0 1h2M5 1h12M0 6h2M5 6h12M0 11h2M5 11h12" stroke="#999" strokeWidth="1.500" /></svg>楽器</BarButton>
                    <BarButton $w={37} $ml={6} $pl={10} aria-label="先頭へ"><svg width="14" height="11"><path d="M0 0h4v11H0zM14 0v11L5 5.500z" fill="#aaa" /></svg></BarButton>
                    <BarButton $joined $w={99} $pl={12} $gap={9}><svg width="12" height="11"><path d="M0 0v11l12-5.500z" fill="#999" /></svg>演奏</BarButton>
                    <Gadget $ml={21} $top={6}><svg width="16" height="16" viewBox="0 0 16 16"><path d="M0 5h3l4-4v14l-4-4H0z" fill="#aaa" /><path d="M9 5q2 3 0 6M11 2q5 6 0 12" fill="none" stroke="#aaa" strokeWidth="1.500" /></svg></Gadget>
                    <Volume type="range" aria-label="音量" />
                    <Gadget $ml={17} $top={6}><svg width="9" height="17"><path d="M1.500 0v6q0 4 3 4t3-4V0M4.500 10v6" fill="none" stroke="#999" strokeWidth="2" /></svg></Gadget>
                    <Gadget $ml={7}><svg width="28" height="28"><circle cx="14" cy="14" r="13" fill="#f2f2f2" stroke="#aaa" strokeWidth="1.500" /><path d="M14 1v8" stroke="#888" strokeWidth="1.500" /><path d="M9 7v14M19 7v14" stroke="#c2c2c2" /></svg></Gadget>
                    <BarButton $w={136} $ml={20}><Grid />フレット板<Key><i /></Key></BarButton>
                    <BarButton $w={118} $ml={6}><Grid />コード<Key><i /></Key></BarButton>
                  </PlayerBar>
                  <Facts>
                    <dt>投稿者</dt><dd>Pencom</dd>
                    <dt>難易度</dt><dd>中級</dd>
                  </Facts>
                  <Promo><Guitar /><a href="#">Can't play "Hey Jude"? Improve your playing via easy step-by-step video lessons!</a><Guitar /></Promo>
                </Main>
              </Body>

              <Caption>
                <BigWord>After</BigWord>
                <SubLine>Wide Screen Sample</SubLine>
                <SubLine>(Mylingual/Japanize)</SubLine>
              </Caption>
            </Page>
            <Scrollbar>
              <ScrollButton aria-label="Scroll up"><svg width="8" height="4"><path d="M0 4h8L4 0z" fill="#777" /></svg></ScrollButton>
              <ScrollTrack><ScrollThumb /></ScrollTrack>
              <ScrollButton aria-label="Scroll down"><svg width="8" height="4"><path d="M0 0h8L4 4z" fill="#111" /></svg></ScrollButton>
            </Scrollbar>
          </View>

          <StatusBar>
            <NavButtons>
              <PlainButton aria-label="Panels" $w={18}><svg width="18" height="17"><rect x="1" y="1" width="15" height="15" rx="3" fill="none" stroke="#222" strokeWidth="2" /><path d="M6 1v15" stroke="#222" strokeWidth="1.500" /></svg></PlainButton>
              <PlainButton aria-label="Link" $w={34}><svg width="16" height="11"><path d="M3.500 11a3.500 3.500 0 0 1 0-6A4.500 4.500 0 0 1 12 4.500 3.300 3.300 0 0 1 12.500 11z" fill="#66665a" /></svg></PlainButton>
              <PlainButton aria-label="Turbo" $w={20}><svg width="17" height="14"><path d="M0 13V8a7 6 0 0 1 14 0v5z" fill="#48678d" /><circle cx="11" cy="5.500" r="5" fill="#dd2b1c" /><path d="M11 2.500v4M6 12l3-4" stroke="#fff" strokeWidth="1.500" /></svg></PlainButton>
            </NavButtons>
            <Zoom>
              <svg width="17" height="17" fill="none" stroke="#333"><circle cx="7.500" cy="7.500" r="5.800" strokeWidth="2" /><path d="M4.500 7.500h6M7.500 4.500v6M12 12l4 4" strokeWidth="2" /></svg>
              <ZoomRange type="range" aria-label="Zoom" defaultValue="26" />
            </Zoom>
          </StatusBar>
        </Client>
      </Window>
    </>
  );
}
